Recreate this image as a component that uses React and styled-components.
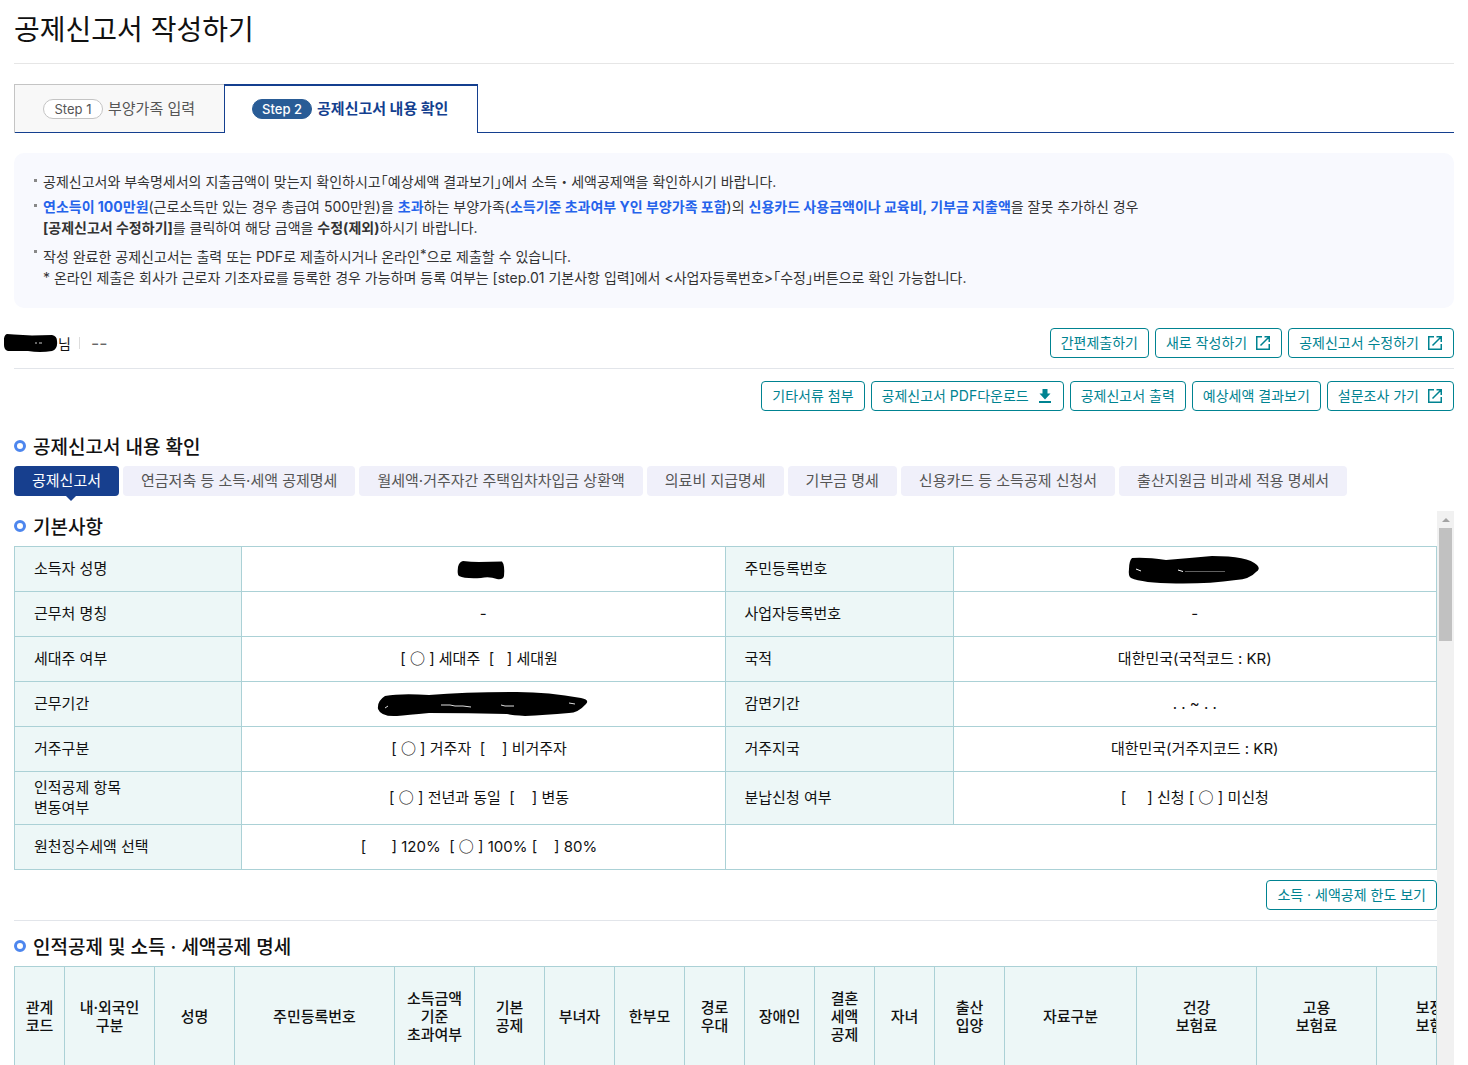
import styled, { createGlobalStyle, css } from "styled-components";

const App = () => {

    return(
        <>
        <GlobalStyle />
        <Page>
            <PageTitle>공제신고서 작성하기</PageTitle>
            <Steps>
                <Step type="button">
                    <StepBadge>Step 1</StepBadge>부양가족 입력
                </Step>
                <Step type="button" $active>
                    <StepBadge $active>Step 2</StepBadge>공제신고서 내용 확인
                </Step>
            </Steps>
            <Notice>
                <NoticeItem>
                    공제신고서와 부속명세서의 지출금액이 맞는지 확인하시고｢예상세액 결과보기｣에서 소득・세액공제액을 확인하시기 바랍니다.
                </NoticeItem>
                <NoticeItem>
                    <Blue>연소득이 100만원</Blue>(근로소득만 있는 경우 총급여 500만원)을 <Blue>초과</Blue>하는 부양가족(<Blue>소득기준 초과여부 Y인 부양가족 포함</Blue>)의 <Blue>신용카드 사용금액이나 교육비, 기부금 지출액</Blue>을 잘못 추가하신 경우<br />
                    <b>[공제신고서 수정하기]</b>를 클릭하여 해당 금액을 <b>수정(제외)</b>하시기 바랍니다.
                </NoticeItem>
                <NoticeItem $spaced>
                    작성 완료한 공제신고서는 출력 또는 PDF로 제출하시거나 온라인<Sup>*</Sup>으로 제출할 수 있습니다.<br />
                    * 온라인 제출은 회사가 근로자 기초자료를 등록한 경우 가능하며 등록 여부는 [step.01 기본사항 입력]에서 &lt;사업자등록번호&gt;｢수정｣버튼으로 확인 가능합니다.
                </NoticeItem>
            </Notice>

            <UserBar>
                <UserName>
                    <NameScribble />님
                    <UserDivider />
                    <Dashes>--</Dashes>
                </UserName>
                <ButtonRow>
                    <LineButton type="button">간편제출하기</LineButton>
                    <LineButton type="button">새로 작성하기<OpenIcon /></LineButton>
                    <LineButton type="button">공제신고서 수정하기<OpenIcon /></LineButton>
                </ButtonRow>
            </UserBar>
            <Actions>
                <LineButton type="button">기타서류 첨부</LineButton>
                <LineButton type="button">공제신고서 PDF다운로드<DownloadIcon /></LineButton>
                <LineButton type="button">공제신고서 출력</LineButton>
                <LineButton type="button">예상세액 결과보기</LineButton>
                <LineButton type="button">설문조사 가기<OpenIcon /></LineButton>
            </Actions>

            <SectionTitle>공제신고서 내용 확인</SectionTitle>
            <Tabs>
                {tabs.map((tab, i) => (
                    <Tab key={tab} type="button" $active={i === 0}>{tab}</Tab>
                ))}
            </Tabs>

            <ScrollArea>
                <ScrollContent>
                    <SectionTitle>기본사항</SectionTitle>
                    <InfoTable>
                        <colgroup>
                            <Col $width="227px" />
                            <Col />
                            <Col $width="228px" />
                            <Col />
                        </colgroup>
                        <tbody>
                            <tr>
                                <th scope="row">소득자 성명</th>
                                <td><OwnerScribble /></td>
                                <th scope="row">주민등록번호</th>
                                <td><NumberScribble /></td>
                            </tr>
                            <tr>
                                <th scope="row">근무처 명칭</th>
                                <td>-</td>
                                <th scope="row">사업자등록번호</th>
                                <td>-</td>
                            </tr>
                            <tr>
                                <th scope="row">세대주 여부</th>
                                <td>[ <Circle>○</Circle>{" ] 세대주  [   ] 세대원  "}</td>
                                <th scope="row">국적</th>
                                <td>대한민국(국적코드 : KR)</td>
                            </tr>
                            <tr>
                                <th scope="row">근무기간</th>
                                <td><PeriodScribble /></td>
                                <th scope="row">감면기간</th>
                                <td>. . ~ . .</td>
                            </tr>
                            <tr>
                                <th scope="row">거주구분</th>
                                <td>[ <Circle>○</Circle>{" ] 거주자  [    ] 비거주자  "}</td>
                                <th scope="row">거주지국</th>
                                <td>대한민국(거주지코드 : KR)</td>
                            </tr>
                            <tr>
                                <th scope="row">인적공제 항목<br />변동여부</th>
                                <td>[ <Circle>○</Circle>{" ] 전년과 동일  [    ] 변동  "}</td>
                                <th scope="row">분납신청 여부</th>
                                <td>{"[     ] 신청 [ "}<Circle>○</Circle> ] 미신청</td>
                            </tr>
                            <tr>
                                <th scope="row">원천징수세액 선택</th>
                                <td>{"[      ] 120%  [ "}<Circle>○</Circle>{" ] 100% [    ] 80%  "}</td>
                                <td colSpan={2}></td>
                            </tr>
                        </tbody>
                    </InfoTable>
                    <LimitRow>
                        <LineButton type="button">소득 · 세액공제 한도 보기</LineButton>
                    </LimitRow>
                    <SectionTitle>인적공제 및 소득 · 세액공제 명세</SectionTitle>
                    <DetailWrap>
                        <DetailTable>
                            <colgroup>
                                {columns.map(([label, width]) => (
                                    <Col key={label} $width={`${width}px`} />
                                ))}
                            </colgroup>
                            <thead>
                                <tr>
                                    {columns.map(([label]) => (
                                        <th key={label} scope="col">{label}</th>
                                    ))}
                                </tr>
                            </thead>
                        </DetailTable>
                    </DetailWrap>
                </ScrollContent>
                <ScrollTrack>
                    <ScrollArrow />
                    <ScrollThumb />
                </ScrollTrack>
            </ScrollArea>
        </Page>
        </>
    )

}

export default App;

const tabs = [
    "공제신고서",
    "연금저축 등 소득·세액 공제명세",
    "월세액·거주자간 주택임차차입금 상환액",
    "의료비 지급명세",
    "기부금 명세",
    "신용카드 등 소득공제 신청서",
    "출산지원금 비과세 적용 명세서",
]

const columns = [
    ["관계\n코드", 50],
    ["내·외국인\n구분", 90],
    ["성명", 80],
    ["주민등록번호", 160],
    ["소득금액\n기준\n초과여부", 80],
    ["기본\n공제", 70],
    ["부녀자", 70],
    ["한부모", 70],
    ["경로\n우대", 60],
    ["장애인", 70],
    ["결혼\n세액\n공제", 60],
    ["자녀", 60],
    ["출산\n입양", 70],
    ["자료구분", 132],
    ["건강\n보험료", 120],
    ["고용\n보험료", 120],
    ["보장성\n보험료", 120],
]

const OpenIcon = () => (
    <Icon viewBox="0 0 16 16" aria-hidden="true">
        <path d="M7 1.75H1.75v12.5h12.5V9M9.5 1.75h4.75V7M14 2L5.5 10.5" fill="none" stroke="currentColor" strokeWidth="1.5" />
    </Icon>
)

const DownloadIcon = () => (
    <Icon viewBox="0 0 16 16" aria-hidden="true">
        <path d="M5.500 1h5v4.500h3L8 11.500 2.500 5.500h3zM2 13h12v2H2z" fill="currentColor" />
    </Icon>
)

const NameScribble = () => (
    <svg width="54" height="20" viewBox="0 0 54 20" aria-hidden="true">
        <path d="M3 1L10 1.5 28 2.5 48 2Q53 3 53 8Q54 16 48 18Q36 20 24 18L4 18Q0 17 0 12Q-1 2 3 1Z" />
        <path d="M31 10h2m2 0h3" stroke="#ccc" />
    </svg>
)

const OwnerScribble = () => (
    <Scribble width="52" height="22" viewBox="0 0 52 22" aria-hidden="true">
        <path d="M6 3Q14 4 22 4L45 3.5Q48 7 47 18Q46 22 40 21Q32 18 24 20Q8 21 2 18Q0 17 1 9Q2 4 6 3Z" />
    </Scribble>
)

const NumberScribble = () => (
    <Scribble width="134" height="30" viewBox="0 0 134 30" aria-hidden="true">
        <path d="M4 4Q18 3 38 6Q62 4 84 2Q120 2 129 11Q133 15 128 18Q122 25 108 26Q80 30 48 29.500Q14 29 3 24Q0 22 1 15Q1 7 4 4Z" />
        <path d="M8 15l5 2M50 16l5 1.500" stroke="#fff" />
        <path d="M57 17.500h40" stroke="#777" strokeWidth="0.8" />
    </Scribble>
)

const PeriodScribble = () => (
    <Scribble width="212" height="26" viewBox="0 0 212 26" aria-hidden="true">
        <path d="M8 5Q24 2 52 4Q90 1 140 1Q172 1 204 7Q213 9 209 13Q201 22 192 22Q168 24 148 25Q134 24 130 23Q92 22 52 22Q30 24 20 25Q4 26 1 18Q0 10 8 5Z" />
        <path d="M8 17l3-2M64 14h9l5 1 8 0 8 1M124 14l4 1 9 0M192 12l6 1" fill="none" stroke="#ddd" />
    </Scribble>
)

const GlobalStyle = createGlobalStyle`
*, *::before, *::after { box-sizing: border-box; }
body {
    margin: 0;
    color: #111;
    background: #fff;
    font-family: Inter, 'Noto Sans CJK KR', sans-serif;
    font-size: 15px;
    overflow: hidden;
}
button { font-family: inherit; cursor: pointer; }
`

const Page = styled.main`
height: 100vh;
padding: 0 14px;
display: flex;
flex-direction: column;
`

const PageTitle = styled.h1`
margin: 0 0 20px;
padding: 10px 0 13px;
border-bottom: 1px solid #e6e6e6;
font-size: 28px;
font-weight: 400;
line-height: 40px;
`

const Steps = styled.div`
display: flex;
height: 49px;
flex-shrink: 0;
margin-bottom: 20px;
box-shadow: inset 0 -1px #143f8f;
`

const Step = styled.button`
display: flex;
align-items: center;
padding: 0 29px 4px 28px;
border: 1px solid #c4c4c4;
border-width: 1px 0 0 1px;
background: #f8f8f8;
box-shadow: inset 0 -1px #143f8f;
color: #555;
font-size: 15px;
${({ $active }) => $active && css`
padding: 0 29px 5px 27px;
border: 1px solid #143f8f;
border-width: 2px 1px 0;
background: #fff;
box-shadow: none;
color: #143f8f;
font-weight: 700;
`}
`

const StepBadge = styled.span`
width: 60px;
height: 20px;
margin: 4px 5px 0 0;
border: 1px solid #c4c4c4;
border-radius: 10px;
background: #fff;
font-size: 13px;
line-height: 18px;
text-align: center;
${({ $active }) => $active && css`
border-color: #295c96;
background: #295c96;
color: #fff;
font-weight: 500;
`}
`

const Notice = styled.ul`
margin: 0;
padding: 18px 20px 20px;
border-radius: 10px;
background: #f8f9fe;
list-style: none;
color: #333;
font-size: 14px;
line-height: 21px;
`

const NoticeItem = styled.li`
position: relative;
padding-left: 9px;
margin-bottom: ${({ $spaced }) => ($spaced ? "0" : "4px")};
padding-top: ${({ $spaced }) => ($spaced ? "4px" : "0")};
&::before {
    content: "";
    position: absolute;
    left: 0;
    top: 8px;
    width: 3px;
    height: 3px;
    background: #888;
}
`

const Blue = styled.b`
color: #2563eb;
`

const Sup = styled.sup`
font-size: 13px;
line-height: 0;
vertical-align: 3px;
`

const UserBar = styled.div`
display: flex;
justify-content: space-between;
align-items: center;
padding: 20px 0 10px;
border-bottom: 1px solid #e2e5ea;
`

const UserName = styled.div`
display: flex;
align-items: center;
margin-left: -10px;
font-size: 14px;
`

const UserDivider = styled.span`
width: 1px;
height: 12px;
margin: 0 11px 0 8px;
background: #ddd;
`

const Dashes = styled.span`
color: #666;
font-size: 18px;
`

const ButtonRow = styled.div`
display: flex;
gap: 6px;
`

const LineButton = styled.button`
display: flex;
align-items: center;
gap: 8px;
height: 30px;
padding: 0 10px 2px;
border: 1px solid #008391;
border-radius: 4px;
background: #fff;
color: #008391;
font-size: 14px;
white-space: nowrap;
`

const Icon = styled.svg`
width: 16px;
height: 16px;
margin-top: 2px;
`

const Actions = styled.div`
display: flex;
justify-content: flex-end;
gap: 6px;
padding: 12px 0 20px;
`

const SectionTitle = styled.h2`
display: flex;
align-items: center;
gap: 7px;
margin: 0;
height: 35px;
padding-bottom: 6px;
font-size: 19px;
font-weight: 500;
&::before {
    content: "";
    width: 12px;
    height: 12px;
    border: 3px solid #4d86ee;
    border-radius: 50%;
}
`

const Tabs = styled.div`
display: flex;
gap: 4px;
margin-bottom: 15px;
`

const Tab = styled.button`
position: relative;
height: 30px;
padding: 0 18px 4px;
border: 0;
border-radius: 4px;
background: #f0f0fa;
color: #555;
font-size: 15px;
white-space: nowrap;
${({ $active }) => $active && css`
background: #173f8e;
color: #fff;
&::after {
    content: "";
    position: absolute;
    left: 52px;
    top: 30px;
    border: 5px solid transparent;
    border-top-color: #173f8e;
    border-bottom: 0;
}
`}
`

const ScrollArea = styled.div`
flex: 1;
min-height: 0;
display: grid;
grid-template-columns: minmax(0, 1fr) 17px;
overflow: hidden;
`

const ScrollContent = styled.div`
min-width: 0;
`

const ScrollTrack = styled.div`
display: flex;
flex-direction: column;
align-items: center;
background: #f1f1f1;
`

const ScrollArrow = styled.span`
margin: 7px 0 6px;
border: 4px solid transparent;
border-bottom-color: #a3a3a3;
border-top: 0;
`

const ScrollThumb = styled.span`
width: 13px;
height: 113px;
background: #c1c1c1;
`

const Col = styled.col`
width: ${({ $width }) => $width || "auto"};
`

const InfoTable = styled.table`
width: 100%;
border-collapse: collapse;
table-layout: fixed;
line-height: 20px;
th, td {
    height: 45px;
    padding: 6px 19px;
    border: 1px solid #abd1d6;
    text-align: center;
    white-space: pre;
}
th {
    background: #edf7f7;
    font-weight: 400;
    text-align: left;
}
`

const Circle = styled.span`
font-family: 'Noto Sans CJK KR', sans-serif;
font-weight: 500;
line-height: 0;
`

const Scribble = styled.svg`
display: block;
margin: 0 auto;
`

const LimitRow = styled.div`
display: flex;
justify-content: flex-end;
margin-bottom: 10px;
padding: 10px 0;
border-bottom: 1px solid #e2e5ea;
`

const DetailWrap = styled.div`
overflow: hidden;
border-right: 1px solid #abd1d6;
`

const DetailTable = styled.table`
width: 1482px;
border-collapse: collapse;
table-layout: fixed;
font-size: 15px;
line-height: 18px;
th {
    height: 100px;
    padding: 0;
    border: 1px solid #abd1d6;
    background: #edf7f7;
    font-weight: 500;
    white-space: pre;
}
`
